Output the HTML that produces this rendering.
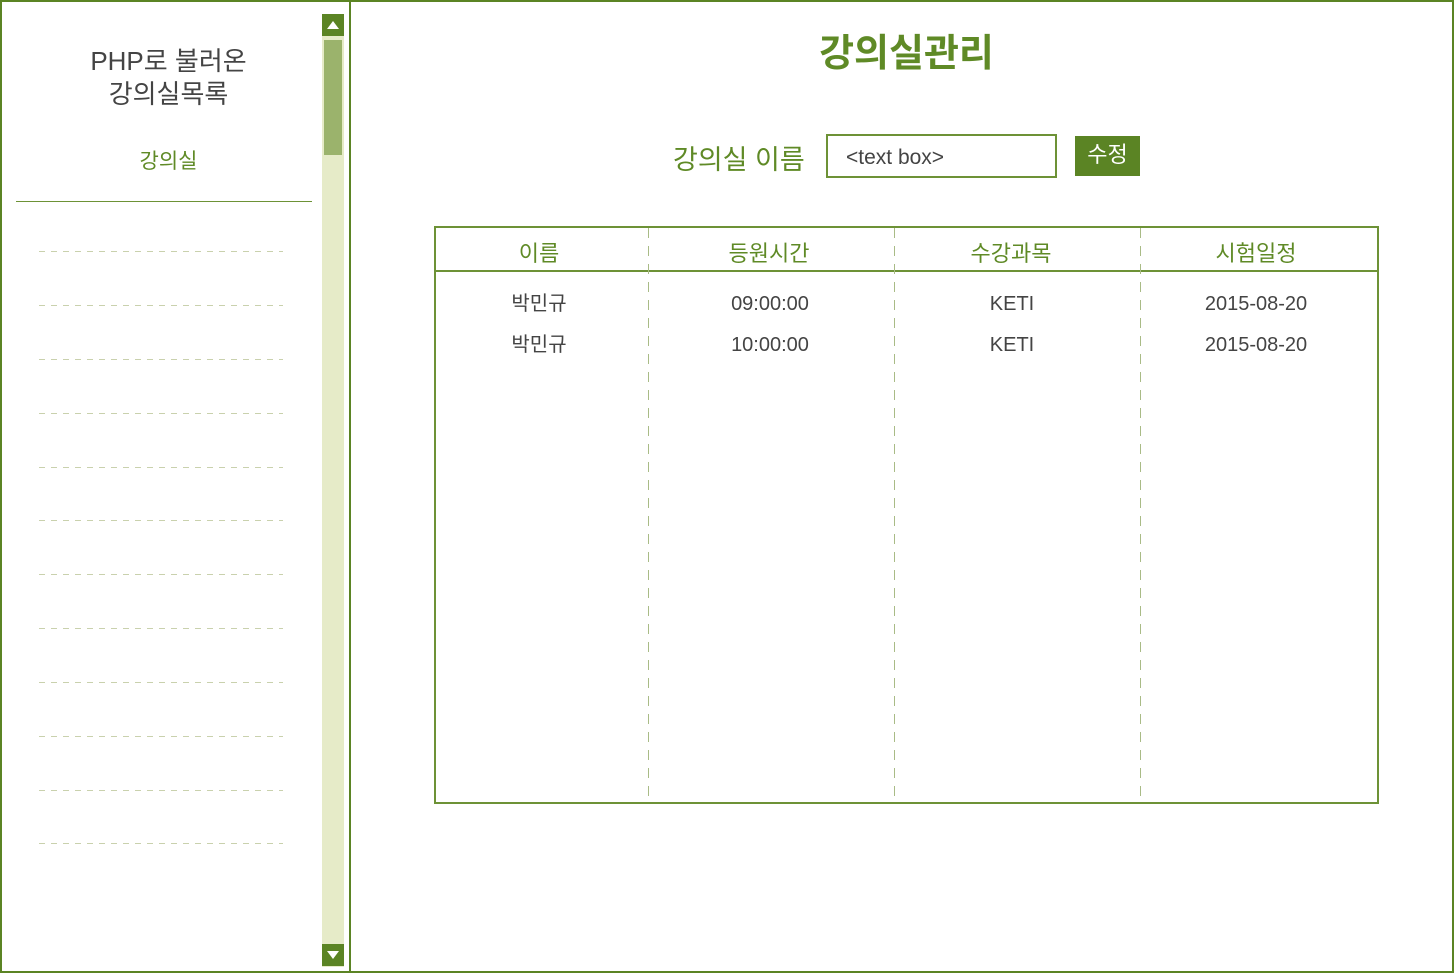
<!DOCTYPE html>
<html><head><meta charset="utf-8"><style>
*{margin:0;padding:0;box-sizing:border-box}
body{width:1454px;height:973px;position:relative;background:#fff;font-family:"Liberation Sans","Noto Sans CJK KR",sans-serif;overflow:hidden}
.a{position:absolute}
.g{color:#5f8a26}
.d{color:#444}
.c{text-align:center}
.dl{position:absolute;left:39px;width:244px;height:1px;background:repeating-linear-gradient(90deg,#c9d1ad 0 6px,transparent 6px 12px)}
.vs{position:absolute;top:228px;height:570px;width:1px;background:repeating-linear-gradient(180deg,#a9bb86 0 10px,transparent 10px 18px)}
</style></head><body>
<div class="a" style="left:0;top:0;width:1454px;height:973px;border:2px solid #5b8424"></div>
<div class="a" style="left:349px;top:0;width:2px;height:973px;background:#5b8424"></div>
<div class="a" style="left:322px;top:14px;width:22px;height:953px;background:#e6ebc8"></div>
<div class="a" style="left:322px;top:14px;width:22px;height:22px;background:#5b8424"></div>
<svg class="a" style="left:322px;top:14px" width="22" height="22"><polygon points="5,15 17,15 11,7" fill="#fff"/></svg>
<div class="a" style="left:324px;top:40px;width:18px;height:115px;background:#9bb36c"></div>
<div class="a" style="left:322px;top:944px;width:22px;height:22px;background:#5b8424"></div>
<svg class="a" style="left:322px;top:944px" width="22" height="22"><polygon points="5,7 17,7 11,15" fill="#fff"/></svg>
<div class="a d c" style="left:16px;top:45px;width:305px;font-size:26px;line-height:33px">PHP로 불러온<br>강의실목록</div>
<div class="a g c" style="left:16px;top:145px;width:305px;font-size:21px">강의실</div>
<div class="a" style="left:16px;top:201px;width:296px;height:1px;background:#6d9236"></div>
<div class="dl" style="top:251px"></div><div class="dl" style="top:305px"></div><div class="dl" style="top:359px"></div><div class="dl" style="top:413px"></div><div class="dl" style="top:467px"></div><div class="dl" style="top:520px"></div><div class="dl" style="top:574px"></div><div class="dl" style="top:628px"></div><div class="dl" style="top:682px"></div><div class="dl" style="top:736px"></div><div class="dl" style="top:790px"></div><div class="dl" style="top:843px"></div>
<div class="a g c" style="left:355px;top:22px;width:1103px;font-size:38px;font-weight:bold">강의실관리</div>
<div class="a g" style="left:673px;top:138px;font-size:27px">강의실 이름</div>
<div class="a d" style="left:826px;top:134px;width:231px;height:44px;border:2px solid #6d9236;font-size:21px;padding:10px 0 0 18px">&lt;text box&gt;</div>
<div class="a c" style="left:1075px;top:136px;width:65px;height:40px;background:#5b8424;color:#fff;font-size:22px;line-height:38px">수정</div>
<div class="a" style="left:434px;top:226px;width:945px;height:578px;border:2px solid #6d9236"></div>
<div class="a" style="left:434px;top:270px;width:945px;height:2px;background:#6d9236"></div>
<div class="vs" style="left:648px"></div><div class="vs" style="left:894px"></div><div class="vs" style="left:1140px"></div>
<div class="a g c" style="left:434px;top:236px;width:210px;font-size:22px">이름</div>
<div class="a g c" style="left:646px;top:236px;width:246px;font-size:22px">등원시간</div>
<div class="a g c" style="left:888px;top:236px;width:246px;font-size:22px">수강과목</div>
<div class="a g c" style="left:1138px;top:236px;width:236px;font-size:22px">시험일정</div>
<div class="a d c" style="left:436px;top:284px;width:206px;font-size:20px;line-height:41px">박민규<br>박민규</div>
<div class="a d c" style="left:648px;top:284px;width:244px;font-size:20px;line-height:41px">09:00:00<br>10:00:00</div>
<div class="a d c" style="left:894px;top:284px;width:236px;font-size:20px;line-height:41px">KETI<br>KETI</div>
<div class="a d c" style="left:1140px;top:284px;width:232px;font-size:20px;line-height:41px">2015-08-20<br>2015-08-20</div>
</body></html>
